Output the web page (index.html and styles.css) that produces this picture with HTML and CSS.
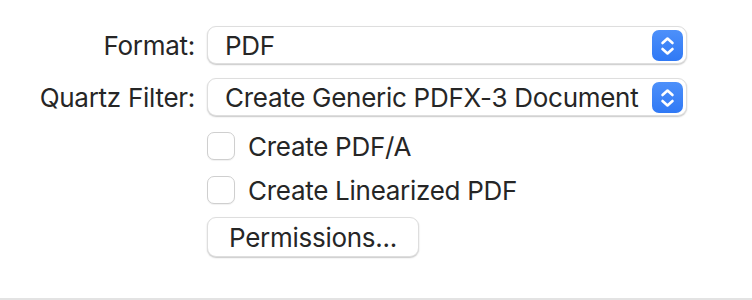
FILE: index.html
```html
<!DOCTYPE html>
<html lang="en">
<head>
  <meta charset="UTF-8" />
  <title>Save as PDF - Options</title>
  <link rel="stylesheet" href="styles.css">
</head>
<body>
  <!-- Export options panel -->
  <div class="panel">
    <div class="row row-popup">
      <span class="row-label">Format:</span>
      <div class="popup">
        <span class="popup-value">PDF</span>
        <span class="stepper">
          <svg width="31" height="31" viewBox="0 0 31 31">
            <path d="M10.5 13 L15.5 8.5 L20.5 13" />
            <path d="M10.5 19 L15.5 23.5 L20.5 19" />
          </svg>
        </span>
      </div>
    </div>

    <div class="row row-popup">
      <span class="row-label">Quartz Filter:</span>
      <div class="popup">
        <span class="popup-value">Create Generic PDFX-3 Document</span>
        <span class="stepper">
          <svg width="31" height="31" viewBox="0 0 31 31">
            <path d="M10.5 13 L15.5 8.5 L20.5 13" />
            <path d="M10.5 19 L15.5 23.5 L20.5 19" />
          </svg>
        </span>
      </div>
    </div>

    <div class="row row-check">
      <span class="row-label"></span>
      <label class="check"><span class="box"></span>Create PDF/A</label>
    </div>

    <div class="row row-check">
      <span class="row-label"></span>
      <label class="check"><span class="box"></span>Create Linearized PDF</label>
    </div>

    <div class="row row-button">
      <span class="row-label"></span>
      <button class="push-button">Permissions...</button>
    </div>
  </div>

  <!-- bottom divider of the sheet -->
  <div class="divider"></div>
</body>
</html>
```

FILE: styles.css
```css
* {
  margin: 0;
  padding: 0;
  box-sizing: border-box;
}

html, body {
  width: 752px;
  height: 300px;
  overflow: hidden;
  background: #ffffff;
  font-family: 'Inter', 'Noto Sans', sans-serif;
  font-size: 26px;
  letter-spacing: -0.28px;
  color: #262626;
}

body {
  display: flex;
  flex-direction: column;
}

.panel {
  flex-grow: 1;
  padding-top: 26px;
}

.row {
  display: flex;
  align-items: center;
  gap: 12px;
}

.row-label {
  width: 195px;
  flex-shrink: 0;
  text-align: right;
}

.row-popup + .row-popup {
  margin-top: 14px;
}

.row-check {
  margin-top: 16px;
}

.row-button {
  margin-top: 13px;
}

.popup {
  width: 480px;
  height: 38px;
  display: flex;
  align-items: center;
  justify-content: space-between;
  padding: 0 3px 0 17px;
  background: #ffffff;
  border: 1px solid #dedede;
  border-radius: 9px;
  box-shadow: 0 1px 1.5px rgba(0, 0, 0, 0.22);
}

.stepper {
  width: 31px;
  height: 31px;
  border-radius: 7px;
  background: linear-gradient(#4d90fa, #3079f5);
  display: flex;
}

.stepper svg path {
  fill: none;
  stroke: #ffffff;
  stroke-width: 2.6;
  stroke-linecap: round;
  stroke-linejoin: round;
}

.check {
  display: flex;
  align-items: center;
  gap: 13px;
  height: 28px;
}

.box {
  width: 28px;
  height: 28px;
  background: #ffffff;
  border: 1px solid #cfcfcf;
  border-radius: 7px;
  box-shadow: 0 1px 1px rgba(0, 0, 0, 0.06);
}

.push-button {
  height: 40px;
  padding: 0 21px;
  font-family: inherit;
  font-size: 26px;
  letter-spacing: inherit;
  color: #262626;
  background: #ffffff;
  border: 1px solid #dedede;
  border-radius: 9px;
  box-shadow: 0 1px 1.5px rgba(0, 0, 0, 0.22);
}

.divider {
  height: 2px;
  background: #e3e3e3;
}
```
